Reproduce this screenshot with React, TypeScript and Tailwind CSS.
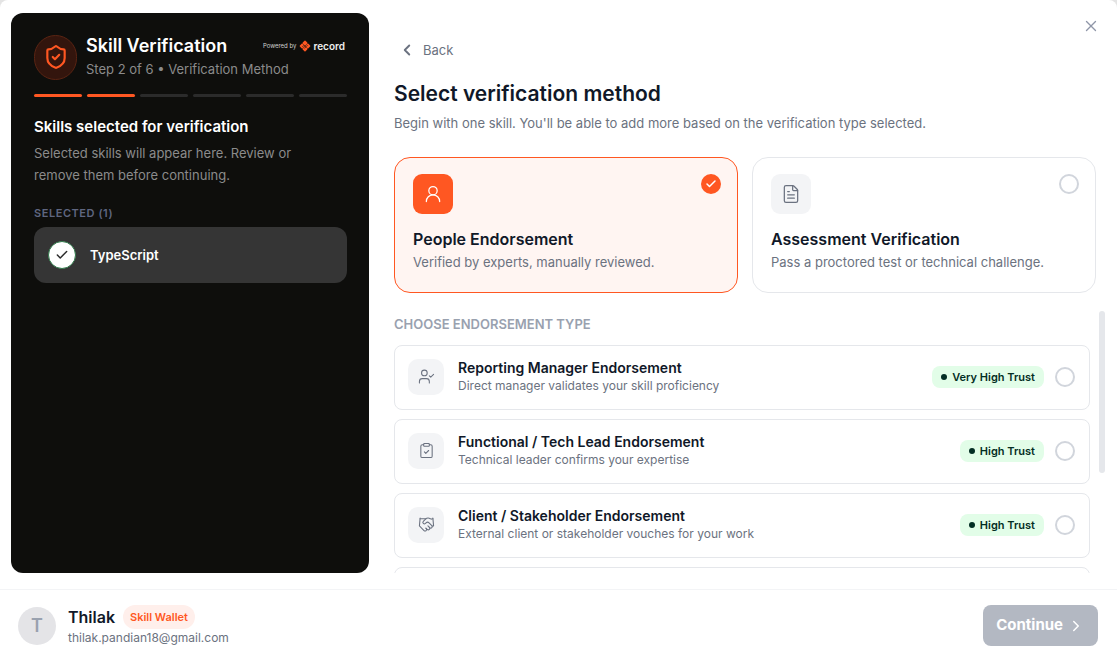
import { useState } from "react";
import {
  Check,
  ChevronLeft,
  ChevronRight,
  ClipboardCheck,
  FileText,
  Handshake,
  ShieldCheck,
  UserCheck,
  UserRound,
  Users,
  X,
} from "lucide-react";

const METHODS = [
  {
    value: "people",
    title: "People Endorsement",
    text: "Verified by experts, manually reviewed.",
    icon: UserRound,
  },
  {
    value: "assessment",
    title: "Assessment Verification",
    text: "Pass a proctored test or technical challenge.",
    icon: FileText,
  },
];

const ENDORSEMENTS = [
  {
    value: "manager",
    title: "Reporting Manager Endorsement",
    text: "Direct manager validates your skill proficiency",
    trust: "Very High Trust",
    icon: UserCheck,
  },
  {
    value: "lead",
    title: "Functional / Tech Lead Endorsement",
    text: "Technical leader confirms your expertise",
    trust: "High Trust",
    icon: ClipboardCheck,
  },
  {
    value: "client",
    title: "Client / Stakeholder Endorsement",
    text: "External client or stakeholder vouches for your work",
    trust: "High Trust",
    icon: Handshake,
  },
  {
    value: "peer",
    title: "Peer Endorsement",
    text: "A colleague confirms your day-to-day work",
    trust: "Medium Trust",
    icon: Users,
  },
];

const STEPS = [1, 2, 3, 4, 5, 6];
const CURRENT_STEP = 2;

function RecordLogo() {
  return (
    <svg viewBox="0 0 24 24" className="size-3 shrink-0" aria-hidden="true">
      <g transform="rotate(45 12 12)" fill="#ff5722">
        <rect x="4" y="4" width="7.8" height="7.8" rx="1.5" />
        <rect x="12.2" y="4" width="7.8" height="7.8" rx="1.5" />
        <rect x="4" y="12.2" width="7.8" height="7.8" rx="1.5" />
        <rect x="12.2" y="12.2" width="7.8" height="7.8" rx="1.5" />
      </g>
      <path d="M7 13.5l3-3M14 13.5l3-3M10.5 17l3-3" stroke="#0e0e0c" strokeWidth="1.4" />
    </svg>
  );
}

function Sidebar() {
  return (
    <aside className="w-[358px] shrink-0 rounded-xl bg-[#0e0e0c] pt-[21px] pr-[22px] pl-[23px] text-white">
      <div className="flex items-center gap-[9px]">
        <span className="flex h-[45px] w-[43px] shrink-0 items-center justify-center rounded-full border border-[#5a2413] bg-[#33150d]">
          <ShieldCheck className="size-[26px] text-[#ff5722]" strokeWidth={2} />
        </span>
        <div className="min-w-0 flex-1">
          <div className="flex items-center justify-between pr-[2px]">
            <h1 className="text-[18px] leading-6 font-semibold">Skill Verification</h1>
            <div className="flex items-center gap-[2px]">
              <span className="mr-[1px] text-[6px] leading-3 text-[#d0d0d0]">Powered by</span>
              <RecordLogo />
              <span className="text-[10px] leading-3 font-semibold text-[#eeeeee]">record</span>
            </div>
          </div>
          <p className="text-[13px] leading-[22px] text-[#8b8b8b]">
            Step 2 of 6 • Verification Method
          </p>
        </div>
      </div>

      <div className="mt-[14px] flex gap-[5px]">
        {STEPS.map((step) => (
          <span
            key={step}
            className={`h-[3px] flex-1 rounded-full ${
              step <= CURRENT_STEP ? "bg-[#ff5722]" : "bg-[#2b2b2b]"
            }`}
          />
        ))}
      </div>

      <h2 className="mt-[18px] text-[15px] leading-6 font-semibold">
        Skills selected for verification
      </h2>
      <p className="mt-[3px] max-w-[280px] text-[13px] leading-[22px] text-[#8b8b8b]">
        Selected skills will appear here. Review or remove them before continuing.
      </p>

      <h3 className="mt-[19px] text-[11px] leading-4 font-semibold tracking-wider text-[#5f6680]">
        SELECTED (1)
      </h3>
      <ul className="mt-[6px]">
        <li className="flex h-14 items-center gap-[14px] rounded-xl bg-[#353535] px-[14px]">
          <span className="flex size-7 items-center justify-center rounded-full border border-[#2f7a4a] bg-white">
            <Check className="size-[14px] text-[#2b2b2b]" strokeWidth={2.5} />
          </span>
          <span className="text-[13px] leading-5 font-semibold">TypeScript</span>
        </li>
      </ul>
    </aside>
  );
}

export default function App() {
  const [method, setMethod] = useState("people");
  const [endorsement, setEndorsement] = useState("");

  return (
    <div className="h-screen overflow-hidden bg-[#e4e4e4] font-['Inter',sans-serif]">
      <div className="relative flex h-full flex-col rounded-t-lg bg-white">
        <button
          aria-label="Close"
          className="absolute top-[17px] right-[17px] text-[#8f96a8]"
        >
          <X className="size-[18px]" strokeWidth={1.8} />
        </button>

        <div className="flex min-h-0 flex-1 gap-[25px] pt-[13px] pr-[12px] pb-4 pl-[11px]">
          <Sidebar />

          <main className="flex min-w-0 flex-1 flex-col">
            <button className="mt-[27px] flex items-center gap-[7px] self-start pl-1 text-[13px] leading-5 text-[#6b7280]">
              <ChevronLeft className="size-[18px]" strokeWidth={2.5} />
              Back
            </button>
            <h2 className="mt-5 text-[21px] leading-7 font-semibold text-[#101828]">
              Select verification method
            </h2>
            <p className="mt-[5px] text-[13px] leading-5 text-[#6b7280]">
              Begin with one skill. You'll be able to add more based on the verification type
              selected.
            </p>

            <div className="mt-6 mr-[9px] grid grid-cols-2 gap-[14px]">
              {METHODS.map((item) => {
                const selected = item.value === method;
                return (
                  <label
                    key={item.value}
                    className={`flex cursor-pointer flex-col rounded-2xl border px-[18px] pt-4 pb-[19px] ${
                      selected ? "border-[#ff5722] bg-[#fff5f2]" : "border-[#e5e7eb] bg-white"
                    }`}
                  >
                    <span className="flex items-start justify-between">
                      <span
                        className={`flex size-10 items-center justify-center rounded-[9px] ${
                          selected ? "bg-[#ff5722] text-white" : "bg-[#f3f4f6] text-[#6b7280]"
                        }`}
                      >
                        <item.icon className="size-5" strokeWidth={1.5} />
                      </span>
                      <span className="relative mr-[-2px] flex">
                        <input
                          type="radio"
                          name="method"
                          checked={selected}
                          onChange={() => setMethod(item.value)}
                          className="size-5 appearance-none rounded-full border-2 border-[#d1d5dc] checked:border-[#ff5722] checked:bg-[#ff5722]"
                        />
                        {selected && (
                          <Check
                            className="pointer-events-none absolute inset-1 size-3 text-white"
                            strokeWidth={3}
                          />
                        )}
                      </span>
                    </span>
                    <span className="mt-[13px] text-[16px] leading-6 font-semibold text-[#101828]">
                      {item.title}
                    </span>
                    <span className="mt-[1px] text-[13px] leading-[21px] text-[#6b7280]">
                      {item.text}
                    </span>
                  </label>
                );
              })}
            </div>

            <div className="mt-[18px] flex min-h-0 flex-1 gap-[9px]">
              <div className="min-w-0 flex-1 overflow-y-auto [scrollbar-width:none]">
                <h3 className="mt-[3px] text-[13px] leading-5 font-semibold text-[#99a1af]">
                  CHOOSE ENDORSEMENT TYPE
                </h3>
                <div className="mt-[11px] flex flex-col gap-[9px]">
                  {ENDORSEMENTS.map((item) => (
                    <label
                      key={item.value}
                      className="flex h-[65px] shrink-0 cursor-pointer items-center rounded-lg border border-[#e5e7eb] bg-white pr-[14px] pb-[2px] pl-[13px]"
                    >
                      <span className="flex size-9 items-center justify-center rounded-[10px] bg-[#f3f4f6] text-[#6b7280]">
                        <item.icon className="size-[17px]" strokeWidth={1.5} />
                      </span>
                      <span className="ml-[14px] flex min-w-0 flex-1 flex-col">
                        <span className="text-[14px] leading-[18px] font-semibold text-[#101828]">
                          {item.title}
                        </span>
                        <span className="text-[12px] leading-[18px] text-[#6b7280]">
                          {item.text}
                        </span>
                      </span>
                      <span className="mr-[11px] flex items-center gap-[5px] rounded-lg bg-[#e2fde8] px-[9px] text-[11px] leading-[22px] font-semibold text-[#032e24]">
                        <span className="size-[6px] rounded-full bg-[#032e24]" />
                        {item.trust}
                      </span>
                      <input
                        type="radio"
                        name="endorsement"
                        checked={item.value === endorsement}
                        onChange={() => setEndorsement(item.value)}
                        className="size-5 appearance-none rounded-full border-2 border-[#d1d5dc] checked:border-[6px] checked:border-[#ff5722]"
                      />
                    </label>
                  ))}
                </div>
              </div>
              <div className="h-[62%] w-[6px] rounded-full bg-[#e5e7eb]" />
            </div>
          </main>
        </div>

        <footer className="flex items-start justify-between border-t border-[#f3f4f6] pt-[15px] pr-[19px] pl-[18px]">
          <div className="flex items-center gap-3">
            <span className="flex size-[38px] items-center justify-center rounded-full bg-[#e4e4e7] text-[18px] font-semibold text-[#99a1af]">
              T
            </span>
            <div>
              <div className="flex items-center gap-2">
                <span className="text-[16px] leading-6 font-semibold text-[#101828]">Thilak</span>
                <span className="rounded-full bg-[#ffefeb] px-[7px] text-[11px] leading-6 font-semibold text-[#ff5722]">
                  Skill Wallet
                </span>
              </div>
              <p className="text-[12px] leading-[17px] text-[#6b7280]">thilak.pandian18@gmail.com</p>
            </div>
          </div>
          <button className="flex h-[41px] items-center gap-1 rounded-lg bg-[#b3b8c2] px-[13px] text-[15px] font-bold text-white">
            Continue
            <ChevronRight className="size-[18px]" strokeWidth={2} />
          </button>
        </footer>
      </div>
    </div>
  );
}
